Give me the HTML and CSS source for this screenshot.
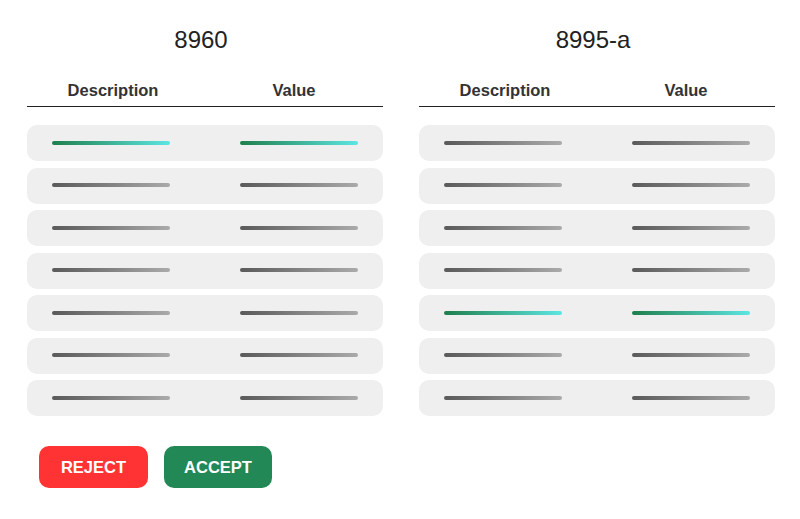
FILE: index.html
```html
<!DOCTYPE html>
<html>
<head>
<meta charset="utf-8">
<link rel="stylesheet" href="styles.css">
</head>
<body>
<div class="panels">
  <section class="panel">
    <h2 class="title">8960</h2>
    <div class="head"><span>Description</span><span>Value</span></div>
    <div class="rows">
      <div class="row"><i class="bar green"></i><i class="bar green"></i></div>
      <div class="row"><i class="bar"></i><i class="bar"></i></div>
      <div class="row"><i class="bar"></i><i class="bar"></i></div>
      <div class="row"><i class="bar"></i><i class="bar"></i></div>
      <div class="row"><i class="bar"></i><i class="bar"></i></div>
      <div class="row"><i class="bar"></i><i class="bar"></i></div>
      <div class="row"><i class="bar"></i><i class="bar"></i></div>
    </div>
  </section>
  <section class="panel">
    <h2 class="title">8995-a</h2>
    <div class="head"><span>Description</span><span>Value</span></div>
    <div class="rows">
      <div class="row"><i class="bar"></i><i class="bar"></i></div>
      <div class="row"><i class="bar"></i><i class="bar"></i></div>
      <div class="row"><i class="bar"></i><i class="bar"></i></div>
      <div class="row"><i class="bar"></i><i class="bar"></i></div>
      <div class="row"><i class="bar green"></i><i class="bar green"></i></div>
      <div class="row"><i class="bar"></i><i class="bar"></i></div>
      <div class="row"><i class="bar"></i><i class="bar"></i></div>
    </div>
  </section>
</div>
<div class="actions">
  <button class="btn reject">REJECT</button>
  <button class="btn accept">ACCEPT</button>
</div>
</body>
</html>
```
FILE: styles.css
```css
html, body {
  margin: 0;
  padding: 0;
  background: #fff;
  font-family: "Liberation Sans", Arial, sans-serif;
  color: #333;
}
body {
  padding-left: 27px;
}
.panels {
  display: flex;
  gap: 36px;
}
.panel {
  width: 356px;
}
.title {
  margin: 25px 0 0;
  height: 30px;
  line-height: 30px;
  font-size: 24px;
  font-weight: 400;
  text-align: center;
  color: #222;
  padding-right: 8px;
}
.head {
  display: grid;
  grid-template-columns: 1fr 1fr;
  padding: 25px 0 6px;
  line-height: 20px;
  font-size: 16.5px;
  font-weight: 700;
  color: #333;
  text-align: center;
  border-bottom: 1px solid #222;
}
.head span:first-child { padding-right: 6px; }
.rows {
  margin-top: 18px;
  display: flex;
  flex-direction: column;
  gap: 6.5px;
}
.row {
  height: 36px;
  background: #efefef;
  border-radius: 10px;
  display: flex;
  align-items: center;
  justify-content: space-between;
  padding: 0 25px;
}
.bar {
  display: block;
  width: 118px;
  height: 4px;
  border-radius: 2px;
  margin-top: -1px;
  background: linear-gradient(to right, #5a5a5a, #aaaaaa);
}
.bar.green {
  background: linear-gradient(to right, #1f7f4c, #5de6e2);
}
.actions {
  display: flex;
  gap: 16px;
  margin-top: 30px;
  padding-left: 12px;
}
.btn {
  border: none;
  height: 42px;
  border-radius: 10px;
  color: #fff;
  font-family: "Liberation Sans", Arial, sans-serif;
  font-size: 16.5px;
  font-weight: 700;
  padding: 0;
}
.reject {
  width: 109px;
  background: #ff3333;
}
.accept {
  width: 108px;
  background: #228855;
}
```
